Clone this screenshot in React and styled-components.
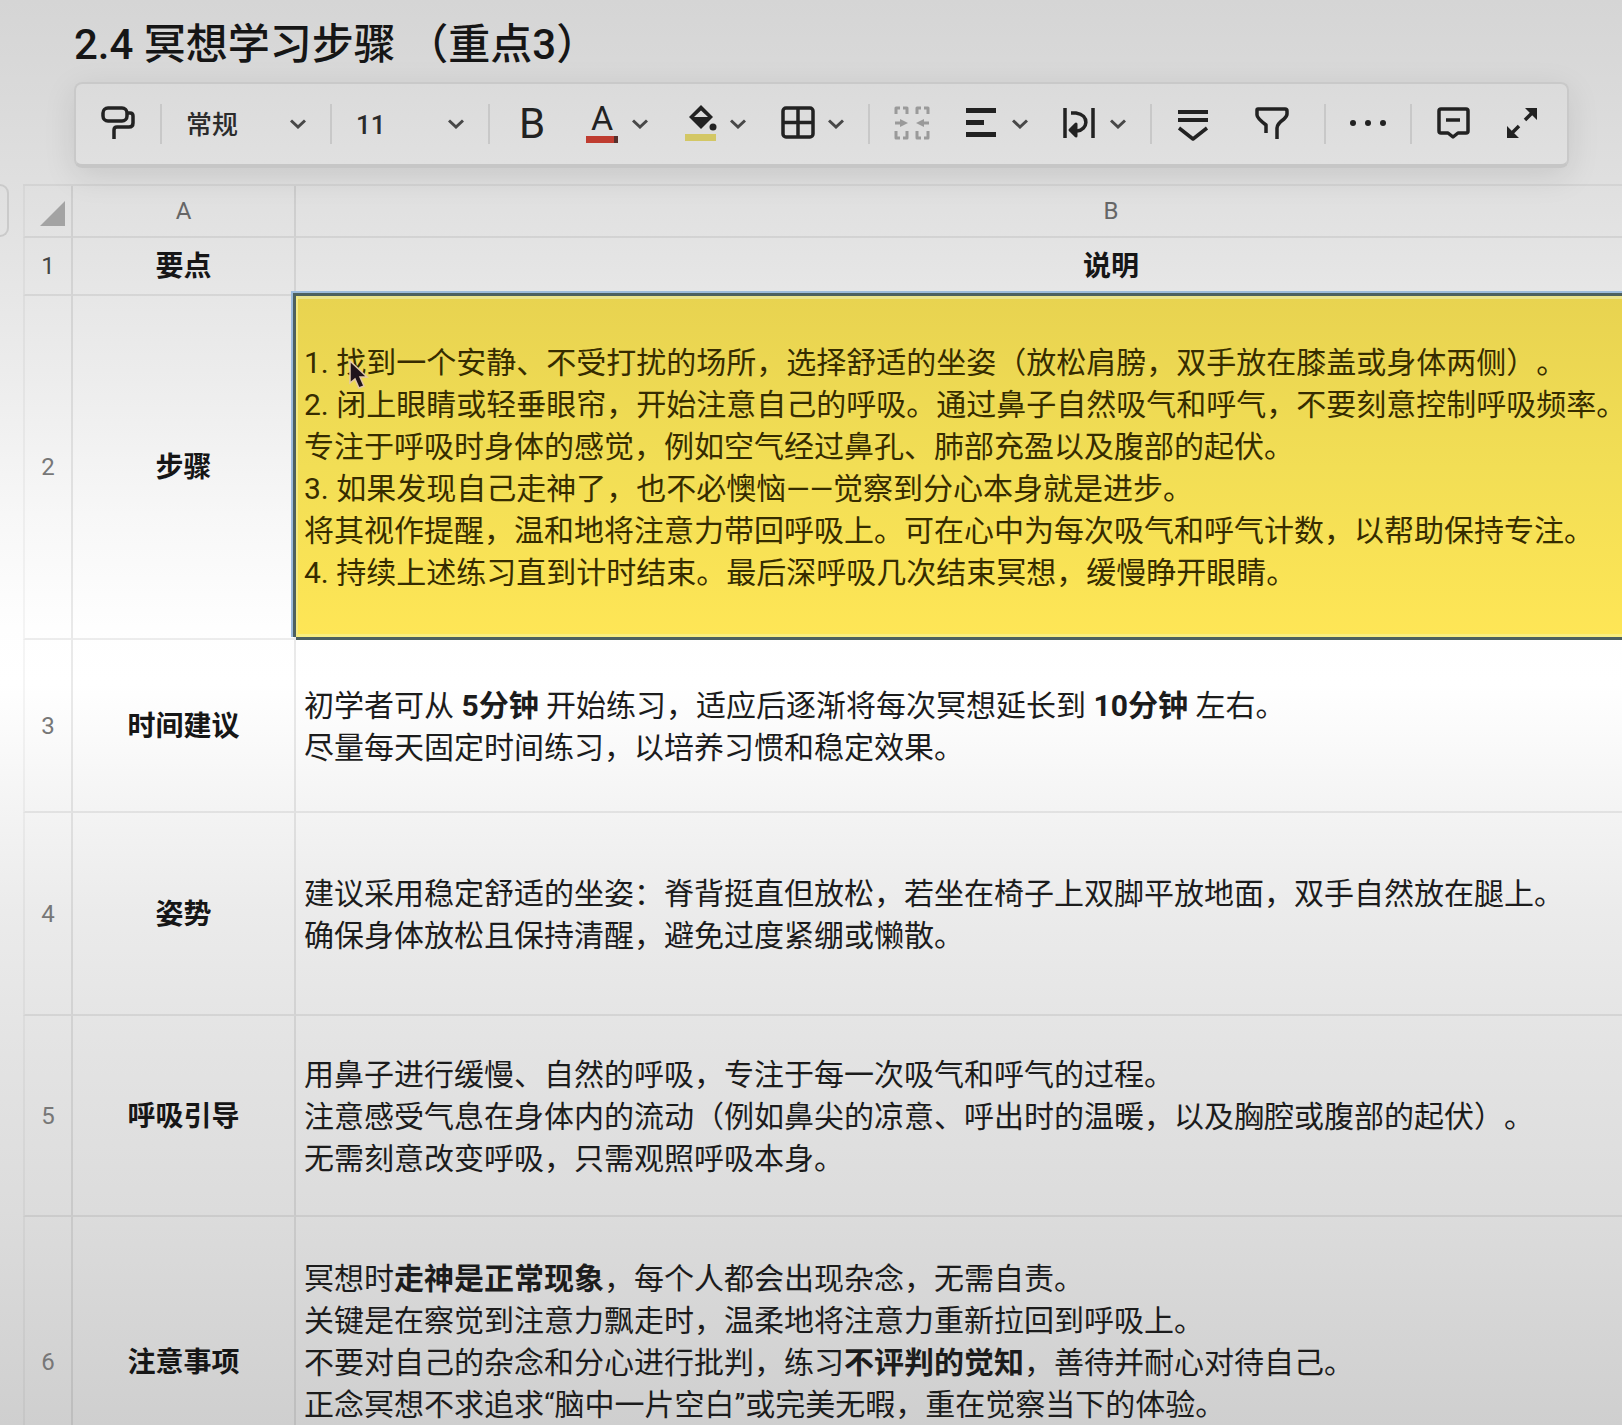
import React from "react";
import styled, { createGlobalStyle, css } from "styled-components";

const GlobalStyle = createGlobalStyle`
  *, *::before, *::after { box-sizing: border-box; }
  body {
    margin: 0;
    font-family: Roboto, "Noto Sans CJK SC", sans-serif;
    color: #1c1c1c;
    text-spacing-trim: space-all;
  }
`;

const Page = styled.main`
  height: 100vh;
  overflow: hidden;
  padding-top: 16px;
  display: flex;
  flex-direction: column;
  background: linear-gradient(
    180deg,
    #d5d5d5 0%,
    #dadada 7%,
    #e4e4e4 18%,
    #ececec 26%,
    #f7f7f7 36%,
    #fefefe 44%,
    #ffffff 48%,
    #f6f6f6 55%,
    #ebebeb 64%,
    #e3e3e3 74%,
    #dcdcdc 85%,
    #cfcfcf 100%
  );
`;

const Title = styled.h1`
  margin: 0 52px 8px 74px;
  font-size: 42px;
  line-height: 58px;
  font-weight: 500;
  color: #161616;
  white-space: pre;
`;

const Toolbar = styled.div`
  position: relative;
  z-index: 1;
  flex: none;
  display: flex;
  align-items: center;
  height: 86px;
  margin: 0 53px 16px 74px;
  padding: 0 24px;
  border: 2px solid #c9c9c9;
  border-bottom: 4px solid #c6c6c6;
  border-radius: 8px;
  background: linear-gradient(#dbdbdb, #e0e0e0);
  box-shadow: 0 8px 32px rgba(0, 0, 0, 0.1);
`;

const Divider = styled.span`
  flex: none;
  width: 2px;
  height: 40px;
  margin: 0 24px;
  background: #c8c8c8;
`;

const Group = styled.div`
  display: flex;
  align-items: center;
  gap: ${(p) => p.$gap || 34}px;
  padding-right: ${(p) => p.$end || 0}px;
`;

const Tool = styled.button`
  display: flex;
  align-items: center;
  gap: 12px;
  height: 40px;
  padding: 0;
  border: 0;
  background: none;
  color: ${(p) => (p.$muted ? "#9a9a9a" : "#222")};
  font-family: inherit;
  cursor: pointer;
  svg { display: block; flex: none; }
`;

const Bold = styled.span`
  width: 36px;
  font-size: 42px;
  line-height: 36px;
  text-align: center;
`;

const ColorLetter = styled.span`
  width: 36px;
  height: 38px;
  padding: 0 2px;
  font-size: 34px;
  line-height: 26px;
  text-align: center;
  display: flex;
  flex-direction: column;
  justify-content: space-between;
  &::after {
    content: "";
    height: 7px;
    background: linear-gradient(90deg, #bf3c30 88%, #56302c 88%);
  }
`;

const Field = styled.label`
  display: grid;
  align-items: center;
  width: ${(p) => p.$width}px;
  > * { grid-area: 1 / 1; }
  svg { justify-self: end; pointer-events: none; }
`;

const Select = styled.select`
  appearance: none;
  width: 100%;
  height: 42px;
  padding: 2px 0 0;
  border: 0;
  background: none;
  color: #2b2b2b;
  font: 500 26px/40px Roboto, "Noto Sans CJK SC", sans-serif;
`;

const SheetArea = styled.div`
  display: flex;
  align-items: flex-start;
  gap: 14px;
`;

const SideHandle = styled.div`
  flex: none;
  width: 9px;
  height: 53px;
  border: 2px solid #cacaca;
  border-left: 0;
  border-radius: 0 10px 10px 0;
`;

const Sheet = styled.table`
  flex: none;
  table-layout: fixed;
  width: 1905px;
  border-collapse: separate;
  border-spacing: 0;
  border-top: 2px solid rgba(0, 0, 0, 0.05);
`;

const Row = styled.tr`
  height: ${(p) => p.$height}px;
`;

const line = css`
  border-right: 2px solid rgba(0, 0, 0, 0.08);
  border-bottom: 2px solid rgba(0, 0, 0, 0.07);
`;

const ColumnHead = styled.th`
  ${line}
  padding: 0;
  font-size: 24px;
  line-height: 30px;
  font-weight: 400;
  color: #666;
`;

const Corner = styled(ColumnHead)`
  border-left: 2px solid rgba(0, 0, 0, 0.04);
  svg { display: block; margin: 6px 5px 0 auto; }
`;

const RowNumber = styled.th`
  ${line}
  border-left: 2px solid rgba(0, 0, 0, 0.04);
  padding: 0;
  font-size: 24px;
  font-weight: 400;
  color: ${(p) => (p.$strong ? "#444" : "#777")};
`;

const Label = styled.th`
  ${line}
  padding: 2px 0 0;
  font-size: 28px;
  line-height: 42px;
  font-weight: 700;
  color: #161616;
`;

const Cell = styled.td`
  ${line}
  padding: 2px 0 ${(p) => p.$below || 0}px 8px;
  font-size: 30px;
  line-height: 42px;
  white-space: pre;
  vertical-align: middle;
  ${(p) =>
    p.$selected &&
    css`
      position: relative;
      color: #362c00;
      background: linear-gradient(#e8d350, #f2de55 50%, #fee656);
      border-bottom: 3px solid #4d605f;
      box-shadow: -3px -3px 0 #4d605f, -4px -4px 0 1px #9dbbdc, inset 2px 0 0 #f3e983,
        inset 0 3px 0 #ebe38c, inset 0 -3px 0 #f8ee80;
    `}
`;

const Cursor = styled.svg`
  position: absolute;
  left: 51px;
  top: 63px;
`;

const Chevron = () => (
  <svg width="16" height="10" viewBox="0 0 16 10" fill="none" stroke="#484848" strokeWidth="3">
    <path d="M1 1.5 8 8l7-6.5" />
  </svg>
);

const Icon = ({ children }) => (
  <svg width="36" height="40" viewBox="0 0 36 40" fill="none" stroke="currentColor" strokeWidth="3.5" strokeLinejoin="round">
    {children}
  </svg>
);

const RollerIcon = () => (
  <Icon>
    <rect x="3" y="4" width="24" height="13" rx="5" />
    <path d="M27 9h3q3 0 3 3v7q0 4-4 4H17q-3 0-3 3v9" />
  </Icon>
);

const FillIcon = () => (
  <Icon>
    <path d="M19 1 31 13 19 25 7 13Z" fill="currentColor" stroke="none" />
    <path d="M19 6.500l7 6.500H12z" fill="#dcdcdc" stroke="none" />
    <circle cx="31" cy="23" r="3.500" fill="currentColor" stroke="none" />
    <path d="M3 33.500h31" stroke="#d3c765" strokeWidth="7" />
  </Icon>
);

const BordersIcon = () => (
  <Icon>
    <rect x="3" y="4" width="30" height="29" rx="3" />
    <path d="M18 4v29M3 18.500h30" />
  </Icon>
);

const MergeIcon = () => (
  <Icon>
    <path d="M2 10V4h4M9 4h4v6M23 10V4h4M30 4h4v6M2 27v7h4M9 34h4v-7M23 27v7h4M30 34h4v-7" strokeWidth="3" />
    <path d="M1 19h6M35 19h-6" strokeWidth="3" />
    <path d="m6 15 8 4-8 4zM30 15l-8 4 8 4z" fill="currentColor" stroke="none" />
  </Icon>
);

const AlignIcon = () => (
  <Icon>
    <path d="M2 6.500h30M2 18.500h18M2 30.500h30" strokeWidth="5" />
  </Icon>
);

const WrapIcon = () => (
  <Icon>
    <path d="M3 4v30M31 4v30M9 9h5c14 2 12 17 1 18" />
    <path d="M8 26l6-6v12z" fill="currentColor" strokeWidth="3" />
  </Icon>
);

const FreezeIcon = () => (
  <Icon>
    <path d="M2 8h30M2 16h30" strokeWidth="4" />
    <path d="m3 24 14 11 14-11" />
  </Icon>
);

const FilterIcon = () => (
  <Icon>
    <path d="M12 29v-8Q3 14 3 11V6q0-1 1-1h27q2 0 2 2v3q0 2-3 5-7 5-7 9v11" />
  </Icon>
);

const MoreIcon = () => (
  <Icon>
    <g fill="currentColor" stroke="none">
      <circle cx="3" cy="19" r="3" />
      <circle cx="18" cy="19" r="3" />
      <circle cx="33" cy="19" r="3" />
    </g>
  </Icon>
);

const CommentIcon = () => (
  <Icon>
    <path d="M5 5h25q2 0 2 2v20q0 2-2 2h-8l-5 4-5-4H5q-2 0-2-2V7q0-2 2-2ZM10 16h14" />
  </Icon>
);

const ExpandIcon = () => (
  <Icon>
    <path d="m21 16 9-9M15 22l-9 9" />
    <path d="M21 4h12v12zM3 22v12h12z" fill="currentColor" stroke="none" />
  </Icon>
);

const rows = [
  {
    label: "步骤",
    height: 344,
    selected: true,
    lines: [
      "1. 找到一个安静、不受打扰的场所，选择舒适的坐姿（放松肩膀，双手放在膝盖或身体两侧）。",
      "2. 闭上眼睛或轻垂眼帘，开始注意自己的呼吸。通过鼻子自然吸气和呼气，不要刻意控制呼吸频率。",
      "专注于呼吸时身体的感觉，例如空气经过鼻孔、肺部充盈以及腹部的起伏。",
      "3. 如果发现自己走神了，也不必懊恼——觉察到分心本身就是进步。",
      "将其视作提醒，温和地将注意力带回呼吸上。可在心中为每次吸气和呼气计数，以帮助保持专注。",
      "4. 持续上述练习直到计时结束。最后深呼吸几次结束冥想，缓慢睁开眼睛。",
    ],
  },
  {
    label: "时间建议",
    height: 173,
    lines: [
      <>初学者可从 <b>5分钟</b> 开始练习，适应后逐渐将每次冥想延长到 <b>10分钟</b> 左右。</>,
      "尽量每天固定时间练习，以培养习惯和稳定效果。",
    ],
  },
  {
    label: "姿势",
    height: 203,
    lines: [
      "建议采用稳定舒适的坐姿：脊背挺直但放松，若坐在椅子上双脚平放地面，双手自然放在腿上。",
      "确保身体放松且保持清醒，避免过度紧绷或懒散。",
    ],
  },
  {
    label: "呼吸引导",
    height: 201,
    lines: [
      "用鼻子进行缓慢、自然的呼吸，专注于每一次吸气和呼气的过程。",
      "注意感受气息在身体内的流动（例如鼻尖的凉意、呼出时的温暖，以及胸腔或腹部的起伏）。",
      "无需刻意改变呼吸，只需观照呼吸本身。",
    ],
  },
  {
    label: "注意事项",
    height: 292,
    below: 42,
    lines: [
      <>冥想时<b>走神是正常现象</b>，每个人都会出现杂念，无需自责。</>,
      "关键是在察觉到注意力飘走时，温柔地将注意力重新拉回到呼吸上。",
      <>不要对自己的杂念和分心进行批判，练习<b>不评判的觉知</b>，善待并耐心对待自己。</>,
      "正念冥想不求追求“脑中一片空白”或完美无暇，重在觉察当下的体验。",
    ],
  },
];

export default function App() {
  return (
    <Page>
      <GlobalStyle />
      <Title>2.4 冥想学习步骤 （重点3）</Title>

      <Toolbar role="toolbar">
        <Tool aria-label="格式刷"><RollerIcon /></Tool>
        <Divider />
        <Field $width={120}>
          <Select aria-label="数字格式" defaultValue="常规"><option>常规</option></Select>
          <Chevron />
        </Field>
        <Divider />
        <Field $width={108}>
          <Select aria-label="字号" defaultValue="11"><option>11</option></Select>
          <Chevron />
        </Field>
        <Divider />
        <Group>
          <Tool aria-label="加粗"><Bold>B</Bold></Tool>
          <Tool aria-label="字体颜色"><ColorLetter>A</ColorLetter><Chevron /></Tool>
          <Tool aria-label="填充颜色"><FillIcon /><Chevron /></Tool>
          <Tool aria-label="边框"><BordersIcon /><Chevron /></Tool>
        </Group>
        <Divider />
        <Group>
          <Tool $muted aria-label="合并单元格"><MergeIcon /></Tool>
          <Tool aria-label="对齐"><AlignIcon /><Chevron /></Tool>
          <Tool aria-label="自动换行"><WrapIcon /><Chevron /></Tool>
        </Group>
        <Divider />
        <Group $gap={42} $end={10}>
          <Tool aria-label="冻结"><FreezeIcon /></Tool>
          <Tool aria-label="筛选"><FilterIcon /></Tool>
        </Group>
        <Divider />
        <Tool aria-label="更多"><MoreIcon /></Tool>
        <Divider />
        <Group $gap={32}>
          <Tool aria-label="评论"><CommentIcon /></Tool>
          <Tool aria-label="全屏"><ExpandIcon /></Tool>
        </Group>
      </Toolbar>

      <SheetArea>
        <SideHandle />
        <Sheet>
          <colgroup>
            <col style={{ width: 50 }} />
            <col style={{ width: 223 }} />
            <col />
          </colgroup>
          <thead>
            <Row $height={52}>
              <Corner>
                <svg width="26" height="26" viewBox="0 0 26 26" fill="#a3a3a3">
                  <path d="M25 0v25H0z" />
                </svg>
              </Corner>
              <ColumnHead scope="col">A</ColumnHead>
              <ColumnHead scope="col">B</ColumnHead>
            </Row>
          </thead>
          <tbody>
            <Row $height={58}>
              <RowNumber scope="row" $strong>1</RowNumber>
              <Label>要点</Label>
              <Label>说明</Label>
            </Row>
            {rows.map((row, i) => (
              <Row key={row.label} $height={row.height}>
                <RowNumber scope="row">{i + 2}</RowNumber>
                <Label>{row.label}</Label>
                <Cell $selected={row.selected} $below={row.below}>
                  {row.lines.map((text, n) => (
                    <div key={n}>{text}</div>
                  ))}
                  {row.selected && (
                    <Cursor width="22" height="32" viewBox="0 0 22 32">
                      <path d="M3 2v22l5-4 4 9 5-2-4-9h7z" fill="#20141c" stroke="#e3c9a8" strokeWidth="1.5" />
                    </Cursor>
                  )}
                </Cell>
              </Row>
            ))}
          </tbody>
        </Sheet>
      </SheetArea>
    </Page>
  );
}
